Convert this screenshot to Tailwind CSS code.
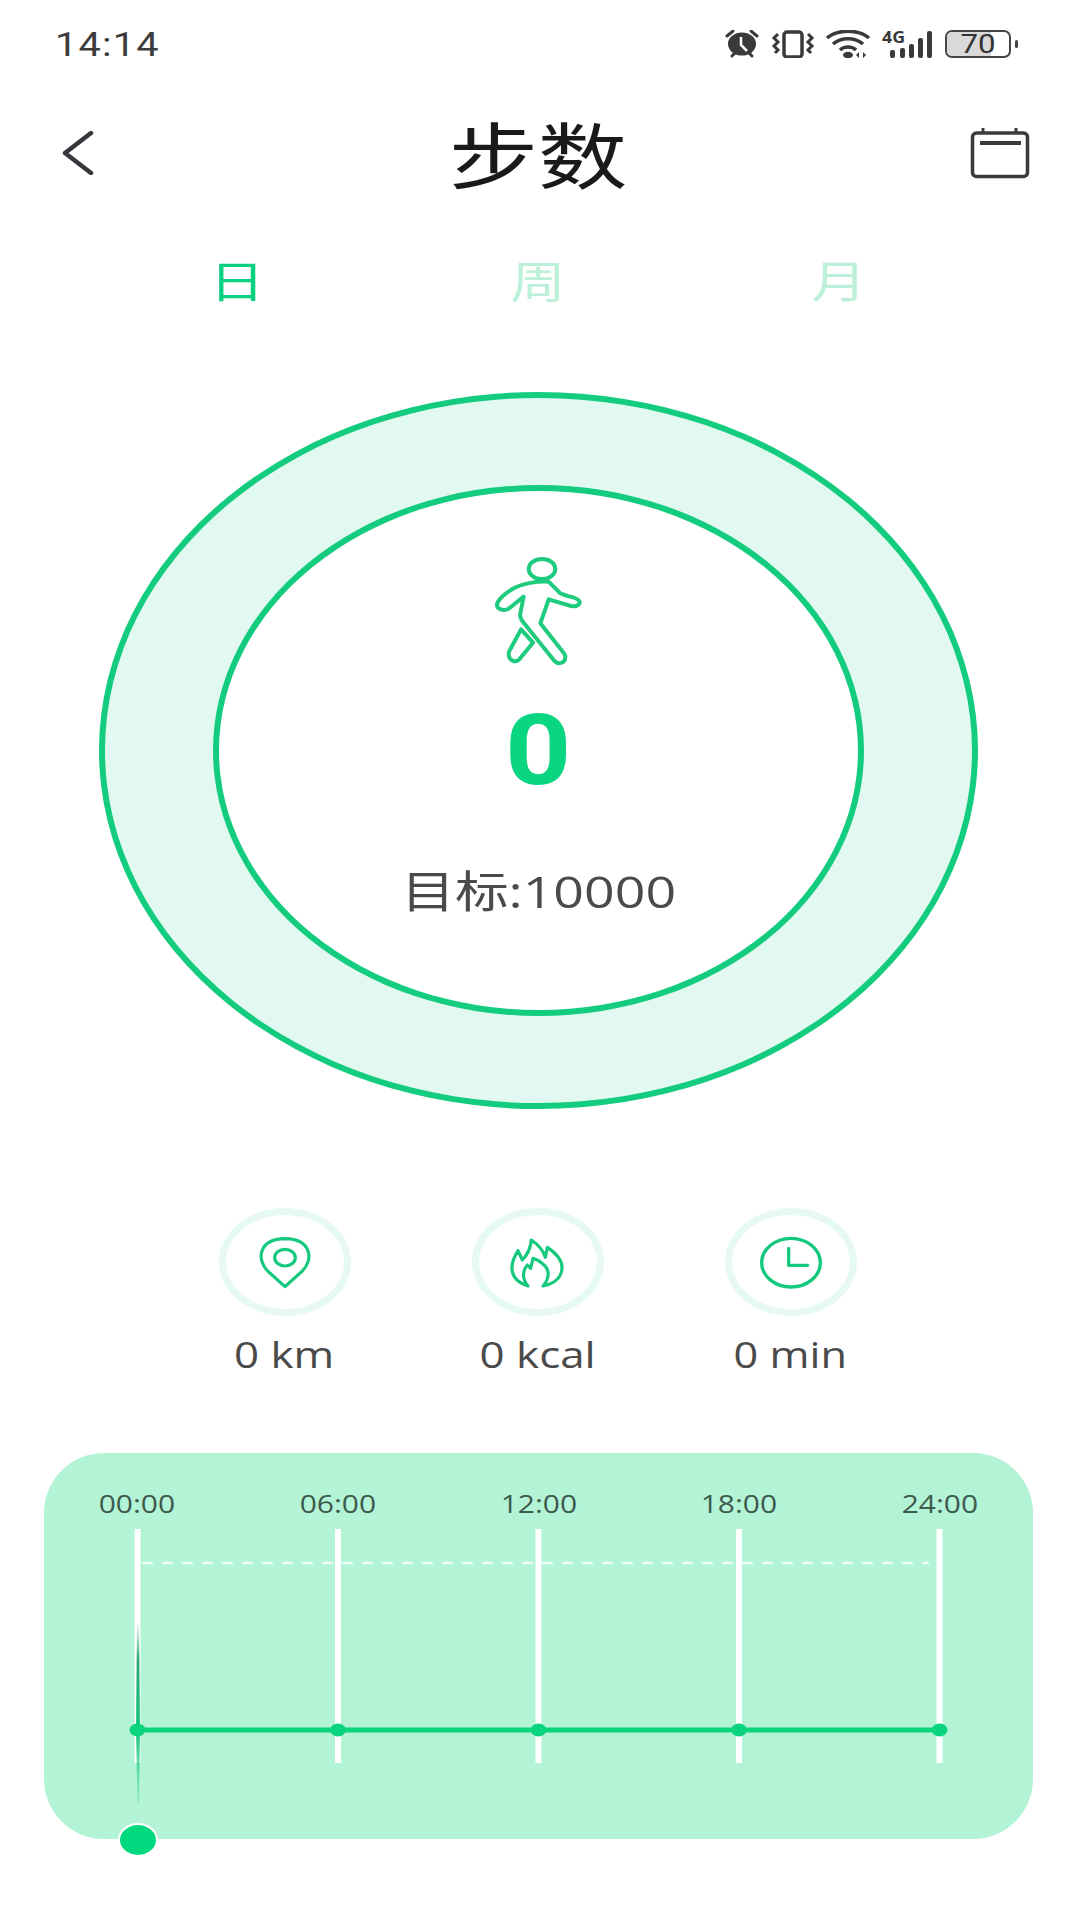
<!DOCTYPE html>
<html lang="en">
<head>
    <meta charset="UTF-8">
    <meta name="viewport" content="width=device-width, initial-scale=1.0">
    <title>步数</title>
    <script src="https://cdn.jsdelivr.net/npm/@tailwindcss/browser@4"></script>
</head>
<body class="w-[1080px] h-[1920px] bg-white overflow-hidden font-['Open_Sans','Noto_Sans_CJK_SC',sans-serif]">
    <!-- Status bar -->
    <div class="h-[88px] flex items-center justify-between pl-[55px] pr-[62px]">
        <span class="inline-block pt-[2px] origin-left scale-x-[1.2] text-[33px] font-normal tracking-[1px] text-[#3c3c3c] font-['Roboto',sans-serif]">14:14</span>
        <div class="flex items-center">
            <svg class="w-[36px] h-[28px]" viewBox="0 0 36 28">
                <path d="M3 6 9 1M33 6 27 1M8 26l4-4M28 26l-4-4" stroke="#3a3a3a" stroke-width="3" stroke-linecap="round"/>
                <ellipse cx="18" cy="14" rx="14" ry="11.5" fill="#3a3a3a"/>
                <path d="M17 7v8l6 6" stroke="#fff" stroke-width="2.5" fill="none"/>
            </svg>
            <svg class="ml-[11px] w-[44px] h-[28px]" viewBox="0 0 44 28" fill="none" stroke="#3a3a3a">
                <rect x="13" y="2" width="18" height="25" rx="3" stroke-width="3.5"/>
                <path d="M7 4 3 8l4 4-4 4 4 4-3 3M37 4l4 4-4 4 4 4-4 4 3 3" stroke-width="3"/>
            </svg>
            <svg class="ml-[11px] w-[45px] h-[28px]" viewBox="0 0 45 28" fill="none" stroke="#3a3a3a">
                <path d="M1 8C12 -1 32 -1 43 8" stroke-width="3.5"/>
                <path d="M7 14C15 7 29 7 37 14" stroke-width="3.5"/>
                <path d="M14 20C18 16 26 16 30 20" stroke-width="3.5"/>
                <ellipse cx="22" cy="25" rx="5" ry="3.2" fill="#3a3a3a" stroke="none"/>
                <path d="M33 22v6l-3-3zM37 22v6l3-3z" fill="#3a3a3a" stroke="none"/>
            </svg>
            <svg class="ml-[11px] w-[51px] h-[28px] overflow-visible" viewBox="0 0 51 28">
                <text x="0" y="13" font-size="16" font-weight="700" fill="#3a3a3a" font-family="Open Sans" textLength="23" lengthAdjust="spacingAndGlyphs">4G</text>
                <g fill="#3a3a3a">
                    <rect x="8" y="20" width="5" height="8" rx="2"/>
                    <rect x="18" y="18" width="5" height="10" rx="2"/>
                    <rect x="27" y="14" width="5" height="14" rx="2"/>
                    <rect x="36" y="8" width="5" height="20" rx="2"/>
                    <rect x="45" y="1" width="5" height="27" rx="2"/>
                </g>
            </svg>
            <div class="ml-[12px] relative w-[66px] h-[28px] rounded-[7px] border-[2.5px] border-[#444] flex items-center justify-center">
                <div class="absolute left-0 top-0 bottom-0 w-[44px] rounded-l-[5px] bg-[#d9d9d9]"></div>
                <span class="relative inline-block scale-x-[1.25] text-[25px] leading-[23px] font-normal text-[#333] font-['Roboto',sans-serif]">70</span>
            </div>
            <div class="ml-[4px] w-[3px] h-[8px] rounded-full bg-[#444]"></div>
        </div>
    </div>

    <!-- Header -->
    <div class="mt-[27px] h-[80px] relative flex items-center justify-between pl-[60px] pr-[50px]">
        <svg class="mb-[4px] w-[36px] h-[44px]" viewBox="0 0 36 44" fill="none">
            <path d="M31 2 5 22l26 20" stroke="#36363c" stroke-width="4.5" stroke-linecap="round" stroke-linejoin="round"/>
        </svg>
        <span class="absolute left-0 right-[3px] text-center text-[72px] leading-none font-normal text-[#1a1a1a]"><span class="inline-block scale-x-[1.24]">步数</span></span>
        <svg class="mb-[4px] w-[60px] h-[52px]" viewBox="0 0 60 52" fill="none" stroke="#3a3a3a">
            <rect x="2.5" y="6" width="55" height="43.5" rx="4" stroke-width="3.5"/>
            <path d="M10 16h41" stroke-width="4"/>
            <path d="M13 1v6M46 1v6" stroke-width="3"/>
        </svg>
    </div>

    <!-- Day / week / month tabs -->
    <div class="mt-[56px] ml-[86px] w-[903px] h-[60px] grid grid-cols-3 items-center text-center text-[44px] leading-none font-normal">
        <span class="text-[#0ccf80]"><span class="inline-block scale-x-[1.25]">日</span></span>
        <span class="text-[#bdf0d8]"><span class="inline-block scale-x-[1.25]">周</span></span>
        <span class="text-[#bdf0d8]"><span class="inline-block scale-x-[1.25]">月</span></span>
    </div>

    <!-- Progress ring -->
    <div class="mt-[81px] ml-[99px] w-[879px] h-[717px] rounded-[50%] border-[6px] border-[#14cc7e] bg-[#e2f9f2] flex items-center justify-center">
        <div class="w-[651px] h-[531px] rounded-[50%] border-[6px] border-[#14cc7e] bg-white flex flex-col items-center pt-[49px]">
            <svg class="w-[120px] h-[130px] shrink-0" viewBox="-4 0 360 390" fill="none" stroke="#1fcb7d" stroke-width="12" stroke-linejoin="round">
                <ellipse cx="185" cy="87" rx="40" ry="30"/>
                <path d="M205 125C175 122 125 130 95 148C75 160 55 178 50 192C48 208 70 214 85 206L130 170L120 220C118 232 122 240 130 248L222 362C232 376 255 370 255 350C255 345 250 338 245 332L180 250L205 178L272 198C292 202 302 190 296 182C290 174 280 172 262 168L240 160Z"/>
                <path d="M122 268 158 308 117 358C105 370 85 362 85 342C85 335 88 330 92 324Z"/>
            </svg>
            <span class="mt-[26px] h-[110px] text-[98px] leading-[110px] font-bold text-[#0ad580] font-['Roboto',sans-serif]"><span class="inline-block scale-x-[1.18]">0</span></span>
            <span class="mt-[55px] h-[60px] text-[44px] leading-[60px] text-[#4a4a4a]"><span class="inline-block scale-x-[1.22]">目标:10000</span></span>
        </div>
    </div>

    <!-- Distance / calories / time -->
    <div class="mt-[99px] ml-[158px] w-[759px] grid grid-cols-3">
        <div class="flex flex-col items-center">
            <div class="w-[132px] h-[108px] rounded-[50%] border-[7px] border-[#e6f9f2] flex items-center justify-center">
                <svg class="w-[100px] h-[100px] shrink-0 overflow-visible" viewBox="0 6 300 300" fill="none" stroke="#14c97d" stroke-width="9.5">
                    <path d="M150 230 98 183C65 150 68 88 150 86C232 88 235 150 202 183Z" stroke-linejoin="round"/>
                    <ellipse cx="150" cy="143" rx="31" ry="25"/>
                </svg>
            </div>
            <span class="mt-[14px] h-[50px] text-[36px] leading-[50px] text-[#4a4a4a]"><span class="inline-block scale-x-[1.22]">0 km</span></span>
        </div>
        <div class="flex flex-col items-center">
            <div class="w-[132px] h-[108px] rounded-[50%] border-[7px] border-[#e6f9f2] flex items-center justify-center">
                <svg class="w-[100px] h-[100px] shrink-0 overflow-visible" viewBox="0 6 300 300" fill="none" stroke="#14c97d" stroke-width="9.5" stroke-linejoin="round" stroke-linecap="round">
                    <path d="M120 228C95 220 70 205 72 170C73 150 82 135 90 122L103 150C118 135 128 112 130 90C145 100 165 120 172 142L178 112C205 130 222 150 222 172C222 205 195 222 165 228C185 205 185 180 168 165C155 152 145 148 135 145L128 175L118 165C105 180 100 205 120 228Z"/>
                </svg>
            </div>
            <span class="mt-[14px] h-[50px] text-[36px] leading-[50px] text-[#4a4a4a]"><span class="inline-block scale-x-[1.22]">0 kcal</span></span>
        </div>
        <div class="flex flex-col items-center">
            <div class="w-[132px] h-[108px] rounded-[50%] border-[7px] border-[#e6f9f2] flex items-center justify-center">
                <svg class="w-[100px] h-[100px] shrink-0 overflow-visible" viewBox="0 6 300 300" fill="none" stroke="#14c97d" stroke-width="10" stroke-linecap="round" stroke-linejoin="round">
                    <ellipse cx="150" cy="158" rx="88" ry="73"/>
                    <path d="M143 115V166H200"/>
                </svg>
            </div>
            <span class="mt-[14px] h-[50px] text-[36px] leading-[50px] text-[#4a4a4a]"><span class="inline-block scale-x-[1.2]">0 min</span></span>
        </div>
    </div>

    <!-- Hourly chart -->
    <div class="mt-[73px] ml-[44px] relative w-[989px] h-[386px] rounded-[60px] bg-[#b3f3d6]">
        <div class="pt-[33px] h-[76px] px-[55px] flex justify-between text-[#3d5a4c] text-[25px] leading-[34px]">
            <span class="w-[76px] text-center"><span class="inline-block scale-x-[1.2]">00:00</span></span>
            <span class="w-[76px] text-center"><span class="inline-block scale-x-[1.2]">06:00</span></span>
            <span class="w-[76px] text-center"><span class="inline-block scale-x-[1.2]">12:00</span></span>
            <span class="w-[76px] text-center"><span class="inline-block scale-x-[1.2]">18:00</span></span>
            <span class="w-[76px] text-center"><span class="inline-block scale-x-[1.2]">24:00</span></span>
        </div>
        <svg class="w-[989px] h-[310px]" viewBox="0 0 989 310" fill="none">
            <defs>
                <linearGradient id="spike" x1="0" y1="0" x2="0" y2="1">
                    <stop offset="0" stop-color="#fff"/>
                    <stop offset="0.2" stop-color="#2ba878"/>
                    <stop offset="0.6" stop-color="#14c97d"/>
                    <stop offset="1" stop-color="#14c97d" stop-opacity="0.2"/>
                </linearGradient>
            </defs>
            <g stroke="#fff" stroke-width="6">
                <path d="M93.5 0V234M294 0V234M494.5 0V234M695 0V234M895.5 0V234"/>
            </g>
            <path d="M98 34H885" stroke="#fff" stroke-opacity="0.75" stroke-width="2.5" stroke-dasharray="11 9"/>
            <path d="M93 94H95L96 201L95 274H93.5L92 201Z" fill="url(#spike)"/>
            <path d="M93.5 201H895.5" stroke="#0bd47e" stroke-width="5"/>
            <g fill="#0bd47e">
                <ellipse cx="93.5" cy="201" rx="8" ry="6.5"/>
                <ellipse cx="294" cy="201" rx="8" ry="6.5"/>
                <ellipse cx="494.5" cy="201" rx="8" ry="6.5"/>
                <ellipse cx="695" cy="201" rx="8" ry="6.5"/>
                <ellipse cx="895.5" cy="201" rx="8" ry="6.5"/>
            </g>
        </svg>
        <div class="absolute left-[74px] bottom-[-18px] w-[40px] h-[34px] rounded-[50%] border-[2px] border-white bg-[#00d97e]"></div>
    </div>
</body>
</html>
